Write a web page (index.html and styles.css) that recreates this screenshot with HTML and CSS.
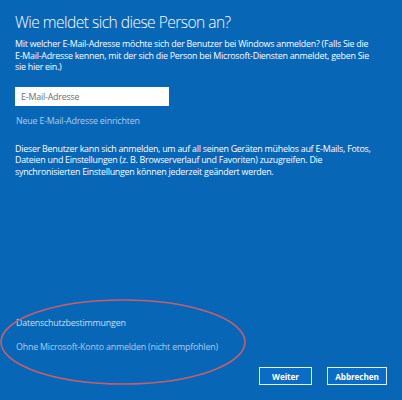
FILE: index.html
```html
<!DOCTYPE html>
<html lang="de">
<head>
<meta charset="utf-8">
<link rel="stylesheet" href="styles.css">
</head>
<body>
<div class="screen">
  <h1 class="title">Wie meldet sich diese Person an?</h1>
  <p class="text intro">Mit welcher E-Mail-Adresse möchte sich der Benutzer bei Windows anmelden? (Falls Sie die E-Mail-Adresse kennen, mit der sich die Person bei Microsoft-Diensten anmeldet, geben Sie sie hier ein.)</p>
  <div class="input">E-Mail-Adresse</div>
  <a class="link new-mail">Neue E-Mail-Adresse einrichten</a>
  <p class="text info">Dieser Benutzer kann sich anmelden, um auf all seinen Geräten mühelos auf E-Mails, Fotos, Dateien und Einstellungen (z. B. Browserverlauf und Favoriten) zuzugreifen. Die synchronisierten Einstellungen können jederzeit geändert werden.</p>
  <div class="spacer"></div>
  <a class="link privacy">Datenschutzbestimmungen</a>
  <a class="link local">Ohne Microsoft-Konto anmelden (nicht empfohlen)</a>
  <div class="buttons">
    <button class="btn">Weiter</button>
    <button class="btn">Abbrechen</button>
  </div>
  <svg class="circle" width="402" height="400" viewBox="0 0 402 400">
    <ellipse cx="123" cy="342" rx="122" ry="42" fill="none" stroke="#c4606e" stroke-width="1.6"/>
  </svg>
</div>
</body>
</html>
```
FILE: styles.css
```css
html, body {
  margin: 0;
  padding: 0;
}
body {
  background: #0866b7;
  font-family: "Open Sans", "Noto Sans", sans-serif;
  color: #ffffff;
}
.screen {
  position: relative;
  width: 402px;
  height: 400px;
  box-sizing: border-box;
  padding: 10px 15px 0 15px;
  display: flex;
  flex-direction: column;
  align-items: flex-start;
  overflow: hidden;
}
.title {
  margin: 0;
  font-size: 15.6px;
  font-weight: 300;
  line-height: 25px;
  letter-spacing: -0.55px;
}
.text {
  margin: 0;
  font-size: 8.9px;
  line-height: 11.6px;
  letter-spacing: -0.25px;
  width: 362px;
}
.intro {
  margin-top: 3px;
}
.input {
  margin-top: 14px;
  width: 154px;
  height: 19px;
  box-sizing: border-box;
  background: #ffffff;
  color: #6d6d6d;
  font-size: 8.9px;
  letter-spacing: -0.2px;
  line-height: 19px;
  padding-left: 6px;
}
.link {
  color: #a6d0f2;
  font-size: 8.9px;
  letter-spacing: -0.2px;
  line-height: 12px;
  padding-left: 1px;
}
.new-mail {
  margin-top: 9px;
}
.info {
  margin-top: 16px;
}
.spacer {
  flex: 1;
}
.privacy {
  color: #bfe0fa;
}
.local {
  margin-top: 12px;
}
.buttons {
  align-self: flex-end;
  display: flex;
  gap: 15px;
  margin-top: 14px;
  margin-bottom: 15px;
}
.btn {
  height: 18px;
  box-sizing: border-box;
  border: 1.5px solid #e6f0fa;
  background: #0a6cc4;
  color: #ffffff;
  font-family: "Open Sans", sans-serif;
  font-weight: 700;
  font-size: 8.2px;
  letter-spacing: -0.1px;
  padding: 0;
}
.btn:first-child {
  width: 53px;
}
.btn:last-child {
  width: 60px;
}
.circle {
  position: absolute;
  left: 0;
  top: 0;
  pointer-events: none;
}
```
